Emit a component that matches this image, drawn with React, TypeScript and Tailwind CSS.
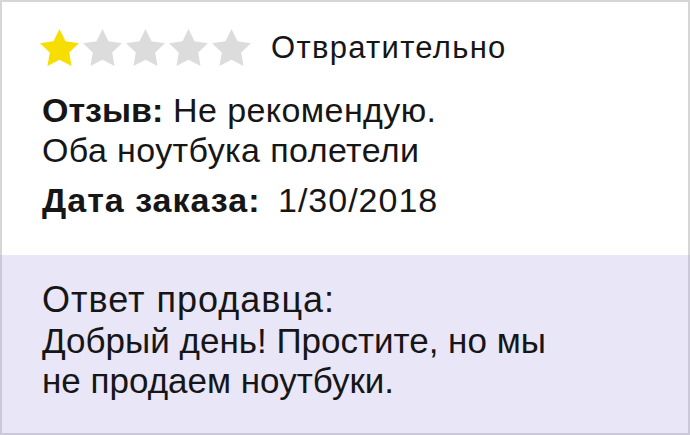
import React from 'react';

const STAR = '12,2 15.09,8.26 22,9.27 17,14.14 18.18,21.02 12,17.77 5.82,21.02 7,14.14 2,9.27 8.91,8.26';

function Star({ filled }: { filled: boolean }) {
  return (
    <svg viewBox="2 2 20 19.02" className="w-[39px] h-[37px]" aria-hidden="true">
      <polygon points={STAR} fill={filled ? '#f6de00' : '#dcdcdc'} />
    </svg>
  );
}

export default function App() {
  const rating = 1;
  return (
    <div className="w-[690px] h-[435px] flex flex-col text-[#161616] font-['Liberation_Sans',Arial,sans-serif]">
      <section className="h-[255px] shrink-0 bg-white border-2 border-b-0 border-[#d6d6d6] pl-[38px] pt-[27px]">
        <div className="flex items-center h-[37px]">
          <div className="flex gap-1">
            {[1, 2, 3, 4, 5].map((n) => (
              <Star key={n} filled={n <= rating} />
            ))}
          </div>
          <span className="ml-5 text-[31px] leading-none tracking-[1.3px]">Отвратительно</span>
        </div>
        <p className="mt-[24px] pl-[2px] text-[34px] leading-[40px] tracking-[0.4px]">
          <span className="font-bold tracking-normal">Отзыв:</span> Не рекомендую.
          <br />
          Оба ноутбука полетели
        </p>
        <p className="mt-[10px] pl-[2px] text-[34px] leading-[40px]">
          <span className="font-bold tracking-[1px] mr-2">Дата заказа:</span>{' '}
          <span className="tracking-[1px]">1/30/2018</span>
        </p>
      </section>
      <section className="flex-1 bg-[#e9e6f8] border-2 border-t-0 border-[#cbc8da] pl-10 pt-[24px]">
        <p className="text-[36px] leading-[42px] tracking-[1px]">Ответ продавца:</p>
        <p className="text-[35px] leading-[40px]">
          Добрый день! Простите, но мы
          <br />
          не продаем ноутбуки.
        </p>
      </section>
    </div>
  );
}
